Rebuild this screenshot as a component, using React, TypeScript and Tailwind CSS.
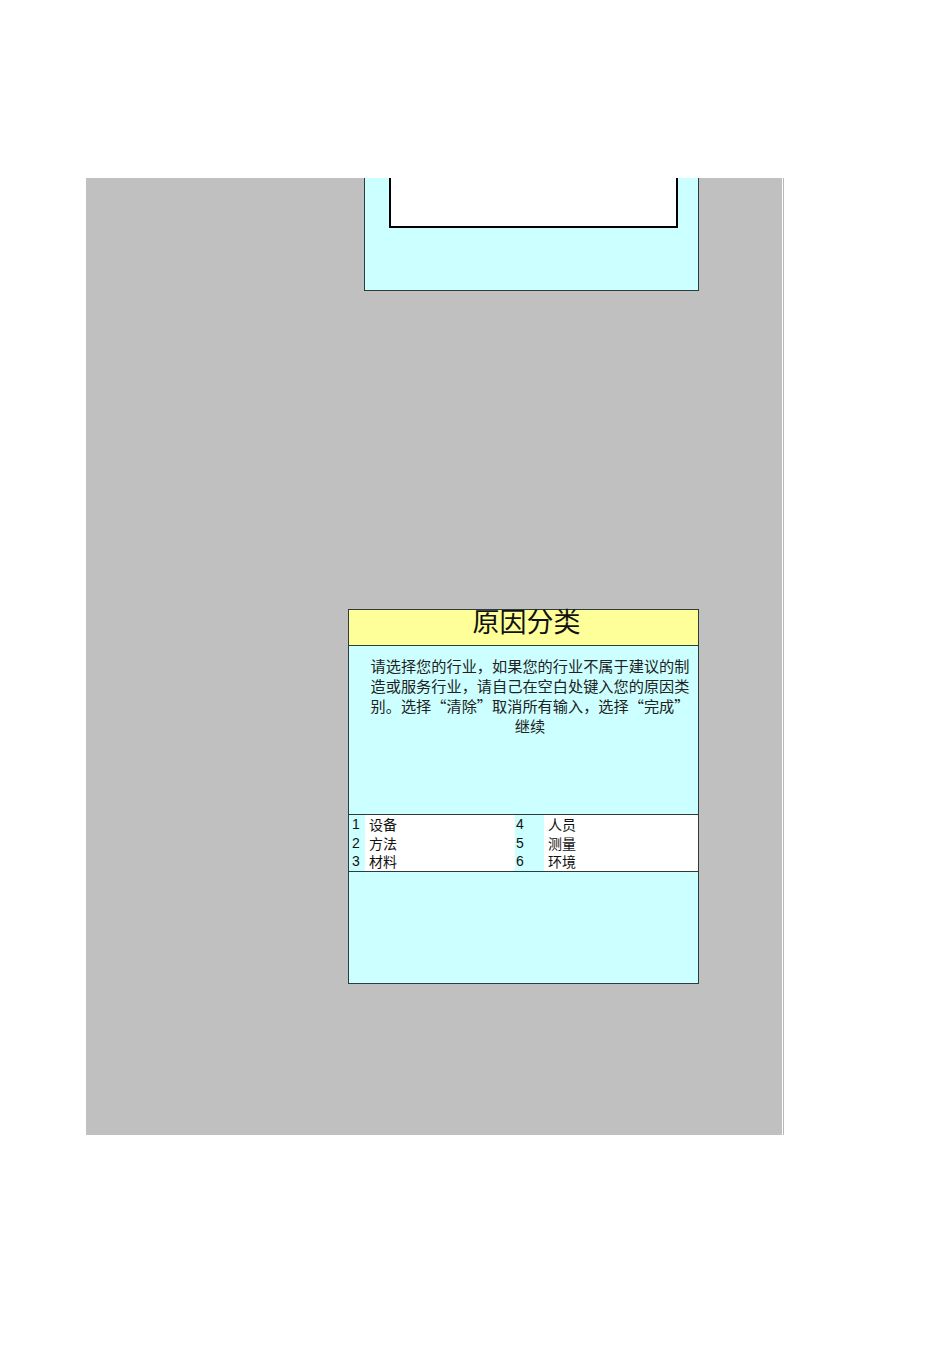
const cjk = '"Noto Sans CJK SC", "Liberation Sans", sans-serif';

const rows = [
  ['1', '设备', '4', '人员'],
  ['2', '方法', '5', '测量'],
  ['3', '材料', '6', '环境'],
];

export default function App() {
  return (
    <div className="min-h-[1345px] w-[950px] bg-white pt-[178px]" style={{ fontFamily: cjk }}>
      <div className="ml-[86px] flex h-[957px] w-[698px]">
        <div className="h-full w-[696px] bg-[#c0c0c0]">
          {/* top dialog, clipped at the top of the sheet */}
          <div className="ml-[278px] h-[113px] w-[335px] border-b border-l border-r border-[#2f3b3b] bg-[#ccffff] pl-[24px]">
            <div className="h-[50px] w-[289px] border-b-2 border-l-2 border-r-2 border-black bg-white" />
          </div>

          {/* cause category dialog */}
          <div className="ml-[262px] mt-[318px] flex w-[351px] flex-col border border-[#2f3b3b] bg-[#ccffff]">
            <div className="flex h-[36px] justify-center border-b border-[#2f3b3b] bg-[#ffff99] pl-[6px]">
              <div className="-mt-[8px] text-[27px] leading-[38px] text-[#111]">原因分类</div>
            </div>
            <div className="h-[169px] border-b border-[#2f3b3b] pl-[21px] pt-[9px]">
              <p className="w-[320px] text-center text-[15.2px] leading-[20px] text-[#222]">
                请选择您的行业，如果您的行业不属于建议的制
                <br />
                造或服务行业，请自己在空白处键入您的原因类
                <br />
                别。选择“清除”取消所有输入，选择“完成”
                <br />
                继续
              </p>
            </div>
            <div className="grid grid-cols-[16px_150px_29px_1fr] border-b border-[#2f3b3b] bg-white text-[14px] leading-[18.7px] text-[#111]">
              {rows.map((r) => (
                <div key={r[0]} className="contents">
                  <div className="bg-[#ccffff] pl-[3px]" style={{ fontFamily: '"Liberation Sans", sans-serif' }}>
                    {r[0]}
                  </div>
                  <div className="pl-[4px]">{r[1]}</div>
                  <div className="bg-[#ccffff] pl-[1px]" style={{ fontFamily: '"Liberation Sans", sans-serif' }}>
                    {r[2]}
                  </div>
                  <div className="pl-[4px]">{r[3]}</div>
                </div>
              ))}
            </div>
            <div className="h-[111px]" />
          </div>
        </div>
        <div className="h-full w-px bg-white" />
        <div className="h-full w-px bg-[#b8b8b8]" />
      </div>
    </div>
  );
}
